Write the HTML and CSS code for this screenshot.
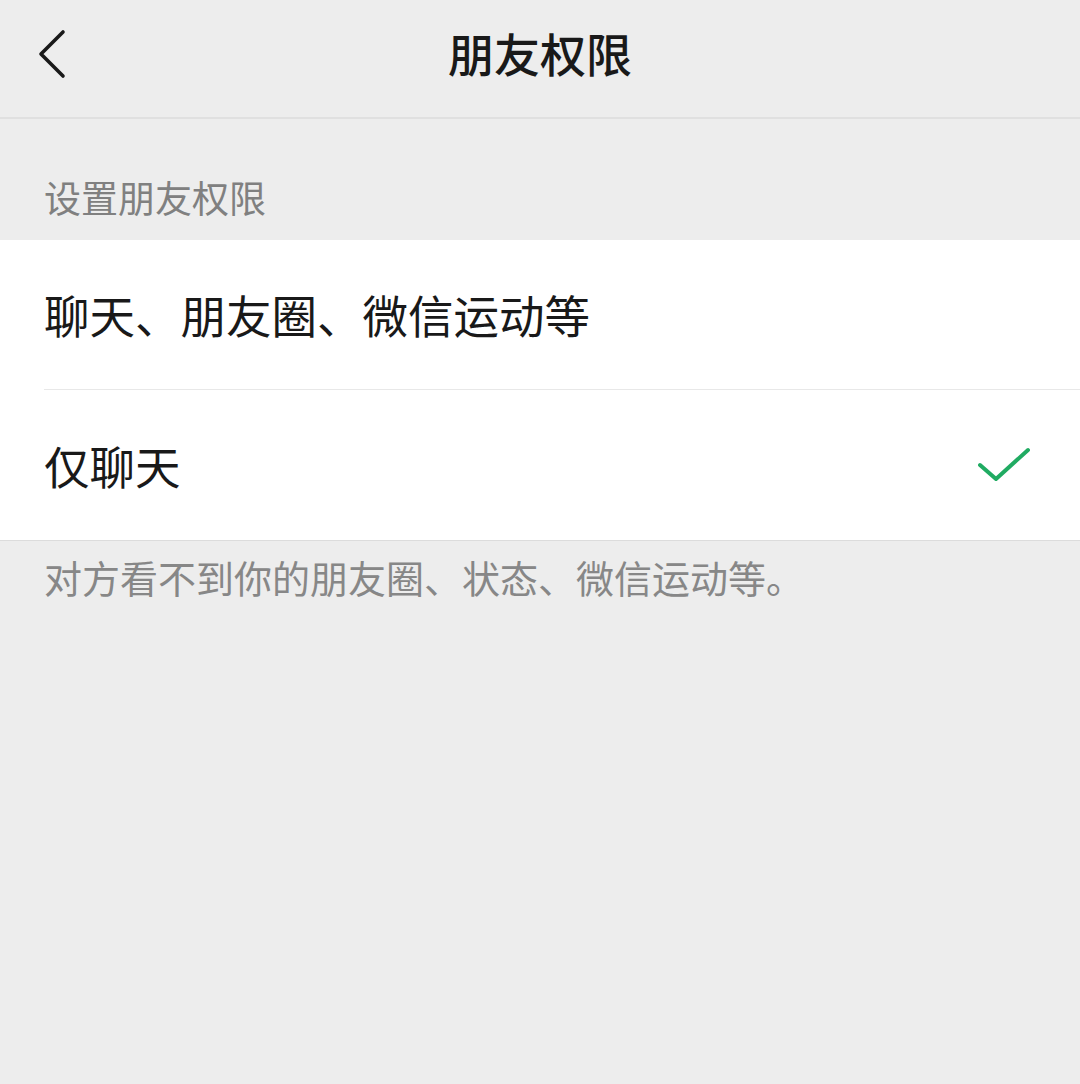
FILE: index.html
```html
<!DOCTYPE html>
<html lang="zh-CN">
<head>
<meta charset="utf-8">
<title>朋友权限</title>
<link rel="stylesheet" href="styles.css">
</head>
<body>
<div class="page">
  <header class="nav">
    <div class="nav-back">
      <svg width="30" height="50" viewBox="0 0 30 50">
        <path d="M25 3 L3 25 L25 47" fill="none" stroke="#191919" stroke-width="3.6" stroke-linecap="round" stroke-linejoin="round"/>
      </svg>
    </div>
    <div class="nav-title">朋友权限</div>
    <div class="nav-side"></div>
  </header>
  <div class="section-label">设置朋友权限</div>
  <div class="list">
    <div class="row">
      <div class="row-inner sep">
        <span class="row-text">聊天、朋友圈、微信运动等</span>
      </div>
    </div>
    <div class="row">
      <div class="row-inner">
        <span class="row-text">仅聊天</span>
        <svg class="check" width="56" height="40" viewBox="0 0 56 40">
          <path d="M4 19 L20 33 L52 4" fill="none" stroke="#20ab62" stroke-width="4" stroke-linecap="round" stroke-linejoin="round"/>
        </svg>
      </div>
    </div>
  </div>
  <div class="note">对方看不到你的朋友圈、状态、微信运动等。</div>
</div>
</body>
</html>
```

FILE: styles.css
```css
html, body {
  margin: 0;
  padding: 0;
  background: #ededed;
}
body {
  font-family: "Noto Sans CJK SC", "Noto Sans", sans-serif;
  color: #191919;
}
.page {
  width: 1080px;
  min-height: 1084px;
  background: #ededed;
}
.nav {
  border-bottom: 2px solid #e0e0e0;
  display: grid;
  grid-template-columns: 1fr auto 1fr;
  align-items: center;
  box-sizing: border-box;
  height: 119px;
}
.nav-back {
  padding-left: 38px;
  display: flex;
  align-items: center;
  padding-bottom: 10px;
}
.nav-back svg {
  display: block;
}
.nav-title {
  font-size: 46px;
  font-weight: 500;
  line-height: 46px;
  padding-bottom: 14px;
}
.section-label {
  font-size: 37px;
  line-height: 38px;
  color: #808080;
  padding: 59px 0 24px 44px;
}
.list {
  background: #ffffff;
  border-bottom: 1px solid #dcdcdc;
}
.row {
  padding-left: 44px;
}
.row-inner {
  height: 150px;
  display: flex;
  align-items: center;
  justify-content: space-between;
  box-sizing: border-box;
  padding-right: 48px;
}
.row-inner.sep {
  border-bottom: 1px solid #e8e8e8;
}
.row-text {
  font-size: 45.5px;
  line-height: 46px;
  padding-bottom: 1px;
}
.check {
  display: block;
  margin-top: 2px;
}
.note {
  font-size: 38px;
  line-height: 38px;
  color: #878787;
  padding: 17px 0 0 44px;
}
```
